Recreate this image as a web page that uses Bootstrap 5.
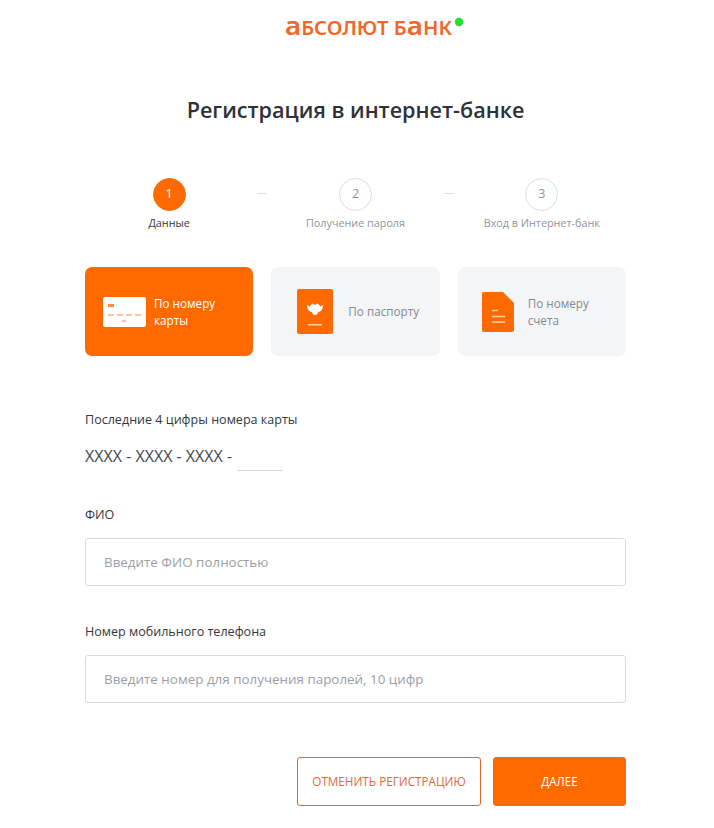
<!DOCTYPE html>
<html lang="ru"><head><meta charset="utf-8"><title>Регистрация</title>
<link href="https://cdn.jsdelivr.net/npm/bootstrap@5.3.0/dist/css/bootstrap.min.css" rel="stylesheet">
<style>
body{font-family:"Open Sans",sans-serif;background:#fff;color:#33373d;font-size:12px}
.page-wrap{width:541px;margin-left:85px}
.logo-row{height:56px}
.logo-text{font-family:"Noto Sans",sans-serif;font-weight:600;font-size:19px;fill:#f2672a}
.logo-a{font-size:26px}
.page-title{font-size:21.6px;font-weight:600;line-height:28px;margin:40px 0 0;text-align:center;color:#2e3238}
.steps{margin-top:54px}
.step-item{display:flex;flex-direction:column;align-items:center;flex:1 1 0;min-width:0}
.step-dot{width:33px;height:33px;border-radius:50%;border:1px solid #d9dcdf;color:#8f959b;font-size:12.5px;display:flex;align-items:center;justify-content:center;background:#fff}
.step-item.on .step-dot{background:#ff6a00;border-color:#ff6a00;color:#fff}
.step-name{font-size:10.8px;line-height:15px;margin-top:4px;color:#8f959b;white-space:nowrap}
.step-item.on .step-name{color:#33373d}
.step-gap{flex:none;width:18px;display:flex;justify-content:center;padding-top:15px}
.step-dash{width:10px;height:1px;background:#dfe1e3}
.method-row{margin-top:37px;grid-template-columns:repeat(3,1fr);gap:18px}
.method{height:89px;border-radius:7px;background:#f3f5f7;color:#858b92;display:flex;align-items:center;font-size:11.7px;line-height:17px}
.method.on{background:#ff6a00;color:#fff}
.method svg{flex:none}
.field-label{font-size:12.55px;line-height:17px;color:#33373d;margin:0}
.digits{font-size:16px;line-height:20px;color:#44484e;margin-top:18px;height:26px;margin-bottom:0}
.digits-input{display:inline-block;width:46px;height:21px;border-bottom:1px solid #d9dcdf;margin-left:1px;vertical-align:-9px}
.text-field{height:48px;border:1px solid #d9dcdf;border-radius:3px;font-size:13.4px;padding:0 18px;color:#33373d;box-shadow:none;font-family:inherit}
.text-field::placeholder{color:#9aa0a6;opacity:1}
.actions{margin-top:54px;gap:12px}
.act{height:49px;border-radius:3px;font-size:11.7px;display:flex;align-items:center;justify-content:center;padding:0;font-family:inherit}
.act-ghost{width:184px;background:#fff;border:1px solid #dd6b33;color:#e2673a}
.act-main{width:133px;background:#ff6a00;border:1px solid #ff6a00;color:#fff}
</style></head>
<body>
<div class="page-wrap">
  <div class="logo-row d-flex justify-content-center">
    <svg width="190" height="44" viewBox="0 0 190 44" style="margin-left:40px" aria-label="Абсолют банк">
      <text x="4" y="35" class="logo-text" textLength="167" lengthAdjust="spacingAndGlyphs"><tspan class="logo-a">а</tspan>БСОЛЮТ Б<tspan class="logo-a">а</tspan>НК</text>
      <circle cx="178" cy="22" r="4.2" fill="#22e02a"/>
    </svg>
  </div>
  <h1 class="page-title">Регистрация в интернет-банке</h1>
  <div class="steps d-flex align-items-start">
    <div class="step-item on"><div class="step-dot">1</div><div class="step-name">Данные</div></div>
    <div class="step-gap"><div class="step-dash"></div></div>
    <div class="step-item"><div class="step-dot">2</div><div class="step-name">Получение пароля</div></div>
    <div class="step-gap"><div class="step-dash"></div></div>
    <div class="step-item"><div class="step-dot">3</div><div class="step-name">Вход в Интернет-банк</div></div>
  </div>
  <div class="method-row d-grid">
    <div class="method on" style="padding-left:18px;gap:8px">
      <svg width="43" height="30" viewBox="0 0 43 30"><rect width="43" height="30" rx="2" fill="#fff"/><rect x="5" y="7" width="6" height="3" fill="#ff8a3a"/><path d="M5 18h6m3 0h6m3 0h6m3 0h6M19 24h4" stroke="#ff8a3a" stroke-width="1.2"/></svg>
      <div>По номеру<br>карты</div>
    </div>
    <div class="method" style="padding-left:26px;gap:15px">
      <svg width="36" height="45" viewBox="0 0 36 45"><rect width="36" height="45" rx="2" fill="#ff6a00"/><path d="M18 26c-2 0-3-2-3-3-3 0-5-3-5-7l3 1.500c0-1 1-2 3-3 1 .5 1 1.500 2 1.500s1-1 2-1.500c2 1 3 2 3 3l3-1.500c0 4-2 7-5 7 0 1-1 3-3 3z" fill="#fff"/><rect x="11" y="35" width="14" height="1.5" fill="#ffd7b5"/></svg>
      <div>По паспорту</div>
    </div>
    <div class="method" style="padding-left:24px;gap:14px">
      <svg width="32" height="40" viewBox="0 0 32 40"><path d="M2 0h19l11 11v27a2 2 0 0 1-2 2H2a2 2 0 0 1-2-2V2a2 2 0 0 1 2-2z" fill="#ff6a00"/><path d="M10 18.500h6M10 24.500h13M10 30h13" stroke="#ffd7b5" stroke-width="1.500"/></svg>
      <div>По номеру<br>счета</div>
    </div>
  </div>
  <p class="field-label" style="margin-top:55px">Последние 4 цифры номера карты</p>
  <p class="digits">XXXX - XXXX - XXXX - <span class="digits-input"></span></p>
  <p class="field-label" style="margin-top:34px">ФИО</p>
  <input class="form-control text-field" style="margin-top:15px" placeholder="Введите ФИО полностью">
  <p class="field-label" style="margin-top:37px">Номер мобильного телефона</p>
  <input class="form-control text-field" style="margin-top:15px" placeholder="Введите номер для получения паролей, 10 цифр">
  <div class="actions d-flex justify-content-end">
    <button class="btn act act-ghost">ОТМЕНИТЬ РЕГИСТРАЦИЮ</button>
    <button class="btn act act-main">ДАЛЕЕ</button>
  </div>
</div>
<script src="https://cdn.jsdelivr.net/npm/bootstrap@5.3.0/dist/js/bootstrap.bundle.min.js"></script>
</body></html>
